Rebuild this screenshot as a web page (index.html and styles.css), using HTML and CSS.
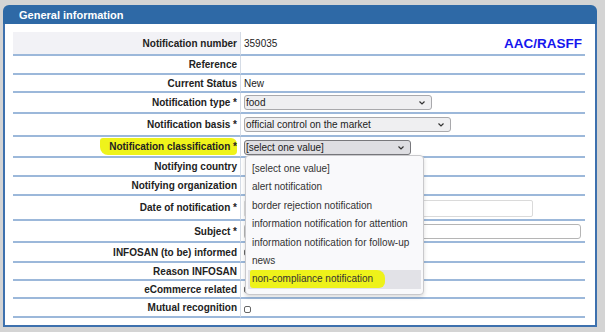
FILE: index.html
```html
<!DOCTYPE html>
<html lang="en">
<head>
<meta charset="UTF-8">
<title>General information</title>
<link rel="stylesheet" href="styles.css">
</head>
<body>
<div class="panel">
    <div class="panel-head">General information</div>
    <div class="panel-body">
        <div class="form">
            <div class="lbl lbl-first">Notification number</div>
            <div class="val val-first"><span>359035</span><span class="brand">AAC/RASFF</span></div>

            <div class="lbl">Reference</div>
            <div class="val"></div>

            <div class="lbl">Current Status</div>
            <div class="val">New</div>

            <div class="lbl">Notification type *</div>
            <div class="val">
                <div class="select w-type"><span>food</span><svg width="6" height="4" viewBox="0 0 6 4"><polyline points="0.5,0.5 3,3 5.5,0.5" fill="none" stroke="#333" stroke-width="1.2"/></svg></div>
            </div>

            <div class="lbl">Notification basis *</div>
            <div class="val">
                <div class="select w-basis"><span>official control on the market</span><svg width="6" height="4" viewBox="0 0 6 4"><polyline points="0.5,0.5 3,3 5.5,0.5" fill="none" stroke="#333" stroke-width="1.2"/></svg></div>
            </div>

            <div class="lbl"><span class="marker">Notification classification *</span></div>
            <div class="val">
                <div class="select w-class"><span>[select one value]</span><svg width="6" height="4" viewBox="0 0 6 4"><polyline points="0.5,0.5 3,3 5.5,0.5" fill="none" stroke="#333" stroke-width="1.2"/></svg></div>
                <ul class="popup">
                    <li>[select one value]</li>
                    <li>alert notification</li>
                    <li>border rejection notification</li>
                    <li>information notification for attention</li>
                    <li>information notification for follow-up</li>
                    <li>news</li>
                    <li class="hover"><span class="marker-item">non-compliance notification</span></li>
                </ul>
            </div>

            <div class="lbl">Notifying country</div>
            <div class="val"></div>

            <div class="lbl">Notifying organization</div>
            <div class="val"></div>

            <div class="lbl">Date of notification *</div>
            <div class="val"><input type="text" class="text w-date"></div>

            <div class="lbl">Subject *</div>
            <div class="val"><input type="text" class="text w-subject"></div>

            <div class="lbl">INFOSAN (to be) informed</div>
            <div class="val"><input type="checkbox" class="check"></div>

            <div class="lbl">Reason INFOSAN</div>
            <div class="val"></div>

            <div class="lbl">eCommerce related</div>
            <div class="val"><input type="checkbox" class="check"></div>

            <div class="lbl">Mutual recognition</div>
            <div class="val"><input type="checkbox" class="check check-low"></div>
        </div>
    </div>
</div>
</body>
</html>
```

FILE: styles.css
```css
body {
    margin: 0;
    background: #d4d4d4;
    font: 10px "Liberation Sans", Arial, sans-serif;
    color: #222;
}
.panel {
    width: 594px;
    margin: 5px 0 0 3px;
}
.panel-head {
    height: 19px;
    line-height: 20px;
    padding-left: 16px;
    background: #2e69a6;
    color: #fff;
    font-size: 11px;
    font-weight: bold;
    border-radius: 6px 6px 0 0;
}
.panel-body {
    background: #fff;
    border: 2px solid #3e71ae;
    border-top: 0;
    padding: 8px 10px 7px 8px;
}
.form {
    display: grid;
    grid-template-columns: 228px 1fr;
    grid-template-rows: 24px 19px 18px 21px 23px 21px 19px 19px 25px 22px 20px 18px 18px 19px;
}
.form > div {
    display: flex;
    align-items: center;
    box-sizing: border-box;
    border-bottom: 2px solid #9cb8da;
    min-width: 0;
}
.lbl {
    justify-content: flex-end;
    padding-right: 3px;
    border-right: 1px solid #d5dce6;
    font-weight: bold;
    white-space: nowrap;
}
.lbl-first {
    background: #f2f2f6;
}
.val {
    position: relative;
    padding: 0 3px;
}
.val-first {
    justify-content: space-between;
}
.brand {
    color: #1616ee;
    font-size: 13.5px;
    font-weight: bold;
}
.select {
    display: flex;
    align-items: center;
    justify-content: space-between;
    box-sizing: border-box;
    height: 15px;
    padding: 0 6px 0 1px;
    border: 1px solid #a9a9ac;
    border-radius: 3px;
    background: #efeff1;
    white-space: nowrap;
}
.w-type {
    width: 188px;
}
.w-basis {
    width: 207px;
}
.w-class {
    width: 167px;
    margin-top: 2px;
    background: #dedee2;
    border-color: #78787c;
}
.marker {
    padding: 3px 0 3px 9px;
    background: #eff31b;
    border-radius: 3px 6px 4px 8px;
}
.popup {
    position: absolute;
    top: 18px;
    left: 4px;
    z-index: 2;
    box-sizing: border-box;
    width: 179px;
    margin: 0;
    padding: 4px 2px 5px;
    list-style: none;
    background: #f9f9fb;
    border: 1px solid #c9c9cc;
    border-radius: 4px;
    box-shadow: 0 2px 4px rgba(0, 0, 0, .15);
}
.popup li {
    height: 18.4px;
    line-height: 18.4px;
    padding-left: 4px;
    color: #333;
    white-space: nowrap;
}
.popup li.hover {
    background: #e2e2e7;
}
.marker-item {
    margin-left: -2px;
    padding: 3px 12px 4px 2px;
    background: #eef21a;
    border-radius: 2px 8px 6px 3px;
}
.text {
    box-sizing: border-box;
    margin: 0;
    padding: 0 2px;
    font: inherit;
    background: #fff;
}
.w-date {
    width: 289px;
    height: 17px;
    margin-top: 2px;
    border: 1px solid #dadada;
    border-radius: 2px;
}
.w-subject {
    width: 337px;
    height: 15px;
    border: 1px solid #b5b5b5;
    border-radius: 3px;
}
.check {
    appearance: none;
    box-sizing: border-box;
    width: 7px;
    height: 7px;
    margin: 0;
    border: 1px solid #666;
    border-radius: 2px;
    background: #fff;
}
.check-low {
    margin-top: 3px;
}
```
